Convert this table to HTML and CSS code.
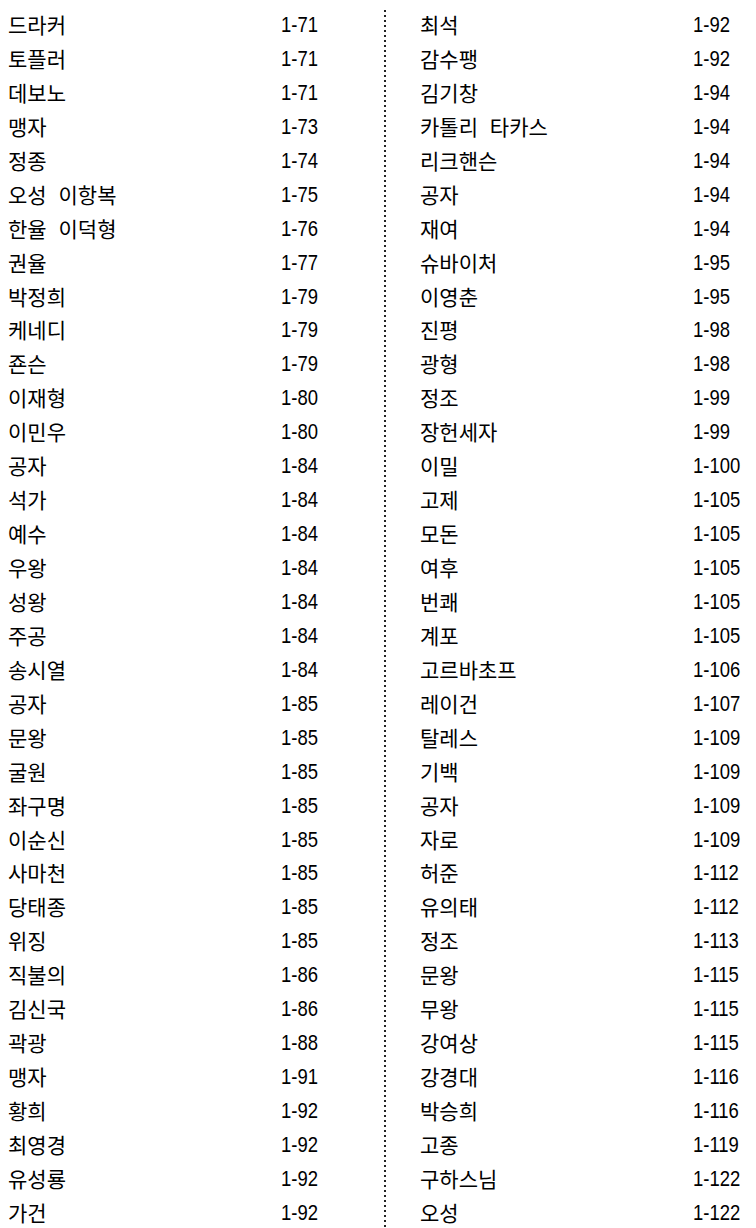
FILE: index.html
```html
<!DOCTYPE html>
<html lang="ko">
<head>
  <meta charset="UTF-8">
  <meta name="viewport" content="width=device-width, initial-scale=1.0">
  <title>인물 색인</title>
  <link rel="stylesheet" href="styles.css">
</head>
<body>
  <div class="index">
    <!-- 왼쪽 열 -->
    <ul class="index-col left">
      <li><span class="name">드라커</span><span class="page">1-71</span></li>
      <li><span class="name">토플러</span><span class="page">1-71</span></li>
      <li><span class="name">데보노</span><span class="page">1-71</span></li>
      <li><span class="name">맹자</span><span class="page">1-73</span></li>
      <li><span class="name">정종</span><span class="page">1-74</span></li>
      <li><span class="name">오성 이항복</span><span class="page">1-75</span></li>
      <li><span class="name">한율 이덕형</span><span class="page">1-76</span></li>
      <li><span class="name">권율</span><span class="page">1-77</span></li>
      <li><span class="name">박정희</span><span class="page">1-79</span></li>
      <li><span class="name">케네디</span><span class="page">1-79</span></li>
      <li><span class="name">죤슨</span><span class="page">1-79</span></li>
      <li><span class="name">이재형</span><span class="page">1-80</span></li>
      <li><span class="name">이민우</span><span class="page">1-80</span></li>
      <li><span class="name">공자</span><span class="page">1-84</span></li>
      <li><span class="name">석가</span><span class="page">1-84</span></li>
      <li><span class="name">예수</span><span class="page">1-84</span></li>
      <li><span class="name">우왕</span><span class="page">1-84</span></li>
      <li><span class="name">성왕</span><span class="page">1-84</span></li>
      <li><span class="name">주공</span><span class="page">1-84</span></li>
      <li><span class="name">송시열</span><span class="page">1-84</span></li>
      <li><span class="name">공자</span><span class="page">1-85</span></li>
      <li><span class="name">문왕</span><span class="page">1-85</span></li>
      <li><span class="name">굴원</span><span class="page">1-85</span></li>
      <li><span class="name">좌구명</span><span class="page">1-85</span></li>
      <li><span class="name">이순신</span><span class="page">1-85</span></li>
      <li><span class="name">사마천</span><span class="page">1-85</span></li>
      <li><span class="name">당태종</span><span class="page">1-85</span></li>
      <li><span class="name">위징</span><span class="page">1-85</span></li>
      <li><span class="name">직불의</span><span class="page">1-86</span></li>
      <li><span class="name">김신국</span><span class="page">1-86</span></li>
      <li><span class="name">곽광</span><span class="page">1-88</span></li>
      <li><span class="name">맹자</span><span class="page">1-91</span></li>
      <li><span class="name">황희</span><span class="page">1-92</span></li>
      <li><span class="name">최영경</span><span class="page">1-92</span></li>
      <li><span class="name">유성룡</span><span class="page">1-92</span></li>
      <li><span class="name">가건</span><span class="page">1-92</span></li>
    </ul>

    <div class="divider"></div>

    <!-- 오른쪽 열 -->
    <ul class="index-col right">
      <li><span class="name">최석</span><span class="page">1-92</span></li>
      <li><span class="name">감수팽</span><span class="page">1-92</span></li>
      <li><span class="name">김기창</span><span class="page">1-94</span></li>
      <li><span class="name">카톨리 타카스</span><span class="page">1-94</span></li>
      <li><span class="name">리크핸슨</span><span class="page">1-94</span></li>
      <li><span class="name">공자</span><span class="page">1-94</span></li>
      <li><span class="name">재여</span><span class="page">1-94</span></li>
      <li><span class="name">슈바이처</span><span class="page">1-95</span></li>
      <li><span class="name">이영춘</span><span class="page">1-95</span></li>
      <li><span class="name">진평</span><span class="page">1-98</span></li>
      <li><span class="name">광형</span><span class="page">1-98</span></li>
      <li><span class="name">정조</span><span class="page">1-99</span></li>
      <li><span class="name">장헌세자</span><span class="page">1-99</span></li>
      <li><span class="name">이밀</span><span class="page">1-100</span></li>
      <li><span class="name">고제</span><span class="page">1-105</span></li>
      <li><span class="name">모돈</span><span class="page">1-105</span></li>
      <li><span class="name">여후</span><span class="page">1-105</span></li>
      <li><span class="name">번쾌</span><span class="page">1-105</span></li>
      <li><span class="name">계포</span><span class="page">1-105</span></li>
      <li><span class="name">고르바초프</span><span class="page">1-106</span></li>
      <li><span class="name">레이건</span><span class="page">1-107</span></li>
      <li><span class="name">탈레스</span><span class="page">1-109</span></li>
      <li><span class="name">기백</span><span class="page">1-109</span></li>
      <li><span class="name">공자</span><span class="page">1-109</span></li>
      <li><span class="name">자로</span><span class="page">1-109</span></li>
      <li><span class="name">허준</span><span class="page">1-112</span></li>
      <li><span class="name">유의태</span><span class="page">1-112</span></li>
      <li><span class="name">정조</span><span class="page">1-113</span></li>
      <li><span class="name">문왕</span><span class="page">1-115</span></li>
      <li><span class="name">무왕</span><span class="page">1-115</span></li>
      <li><span class="name">강여상</span><span class="page">1-115</span></li>
      <li><span class="name">강경대</span><span class="page">1-116</span></li>
      <li><span class="name">박승희</span><span class="page">1-116</span></li>
      <li><span class="name">고종</span><span class="page">1-119</span></li>
      <li><span class="name">구하스님</span><span class="page">1-122</span></li>
      <li><span class="name">오성</span><span class="page">1-122</span></li>
    </ul>
  </div>
</body>
</html>
```

FILE: styles.css
```css
/* Basic page styles */
body {
  margin: 0;
  padding: 0;
  background-color: #fff;
  color: #000;
  font-family: "Noto Sans CJK KR", "Noto Sans", sans-serif;
  font-size: 21px;
}

.index {
  display: grid;
  grid-template-columns: 384px 2px 1fr;
  min-height: 1228px;
}

.index-col {
  list-style: none;
  margin: 0;
  padding: 8px 0 0 0;
}

.index-col.left {
  padding-left: 8px;
}

.index-col.right {
  padding-left: 34px;
}

.index-col li {
  display: grid;
  grid-template-columns: 273px auto;
  height: 33.94px;
  line-height: 33.94px;
  white-space: nowrap;
}

.name {
  word-spacing: 6px;
}

.page {
  font-family: "Liberation Sans", Arial, sans-serif;
  font-size: 22px;
  display: inline-block;
  transform: scaleX(0.84);
  transform-origin: left center;
}

/* dotted separator between the two columns */
.divider {
  margin-top: 10px;
  background-image: repeating-linear-gradient(to bottom, #222 0, #222 2px, transparent 2px, transparent 5px);
}
```
